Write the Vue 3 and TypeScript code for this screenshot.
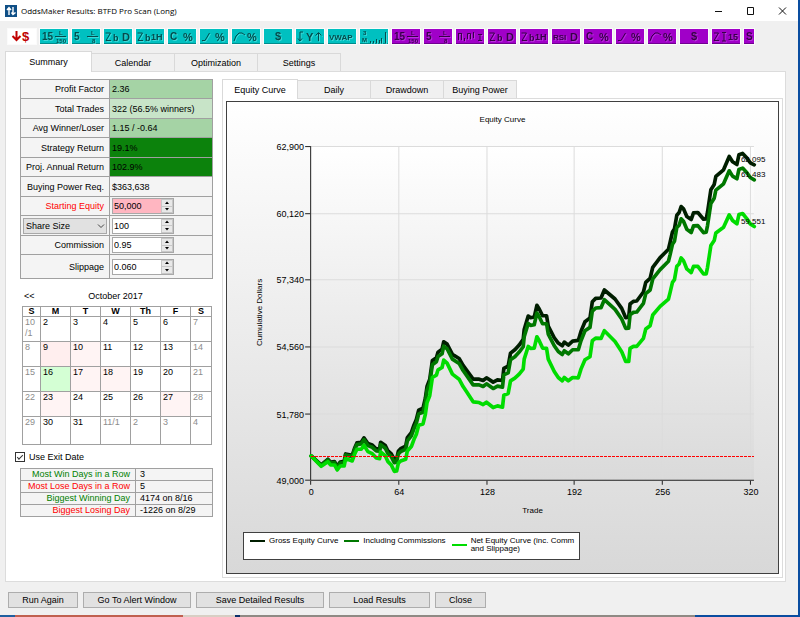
<script setup lang="ts">
import { ref } from 'vue'

interface Mark {
  text: string
  x: number
  y: number
  size: number
}
interface Tool {
  label: string
  tone: 'teal' | 'violet'
  marks: Mark[]
  path?: string
  cut?: boolean
}

const mk = (text: string, x: number, y: number, size = 10): Mark => ({ text, x, y, size })

const minute = (n: string, d: string) => ({
  marks: [mk(n, 2, 11, 10), mk('L', 19, 6, 6), mk(d, d.length > 1 ? 16 : 20, 14, 6)],
  path: 'M15 7.5H26',
})
const percentB = (unit: string) => ({
  marks: [mk('b', 9, 12, 9), unit === 'D' ? mk(unit, 18, 12, 11) : mk(unit, 15, 11, 9)],
  path: 'M1.5 4H6.5L2 11.5H7',
})

const tools: Tool[] = [
  { label: '15 minute volume', tone: 'teal', ...minute('15', '150') },
  { label: '5 minute volume', tone: 'teal', ...minute('5', '8') },
  { label: 'Daily band', tone: 'teal', ...percentB('D') },
  { label: 'Hourly band', tone: 'teal', ...percentB('1H') },
  { label: 'Change from close', tone: 'teal', marks: [mk('C', 2, 11), mk('%', 15, 12, 11)] },
  { label: 'Change from open', tone: 'teal', marks: [mk('%', 15, 12, 11)], path: 'M2 11.5H5L9.5 4' },
  { label: 'Change from high', tone: 'teal', marks: [mk('%', 15, 12, 11)], path: 'M2 12L4 7L7 4H10L13 6' },
  { label: 'Price', tone: 'teal', marks: [mk('$', 11, 11, 11)] },
  { label: 'Yearly range', tone: 'teal', marks: [mk('Y', 10, 12, 11)], path: 'M7 3H4V12M2 9.5L4 12L6 9.5M22.5 12V4M19.5 6.5L22.5 3.5L25.5 6.5' },
  { label: 'VWAP', tone: 'teal', marks: [mk('VWAP', 1, 11, 8)] },
  { label: '3 month volume', tone: 'teal', marks: [mk('3', 3, 6, 6), mk('M', 2, 13, 6)], path: 'M10.5 14V12M13.5 14V12M16.5 14V10M19.5 14V11M21.5 14V9M25.5 14V3' },
  { label: '15 minute volume', tone: 'violet', ...minute('15', '150') },
  { label: '5 minute volume', tone: 'violet', ...minute('5', '8') },
  { label: 'Candles', tone: 'violet', marks: [], path: 'M2.5 4V11M5.5 4V11M2.5 4.5H5M8.5 9V12M11.5 10V4.5H14.5V10M17.5 3V9M22 5.5H26M24 5V11M22 11.5H26' },
  { label: 'Daily band', tone: 'violet', ...percentB('D') },
  { label: 'Hourly band', tone: 'violet', ...percentB('1H') },
  { label: 'Daily RSI', tone: 'violet', marks: [mk('RSI', 1, 11, 8), mk('D', 18, 12, 11)] },
  { label: 'Change from close', tone: 'violet', marks: [mk('C', 2, 11), mk('%', 15, 12, 11)] },
  { label: 'Change from open', tone: 'violet', marks: [mk('%', 15, 12, 11)], path: 'M2 11.5H5L9.5 4' },
  { label: 'Change from high', tone: 'violet', marks: [mk('%', 15, 12, 11)], path: 'M2 12L4 7L7 4H10L13 6' },
  { label: 'Price', tone: 'violet', marks: [mk('$', 11, 11, 11)] },
  { label: '15 minute range', tone: 'violet', marks: [mk('15', 16, 11, 9)], path: 'M2 4H6.5L2 11.5H7M10 3.5H14M12 3V12M10 12H14' },
  { label: 'Spread', tone: 'violet', marks: [mk('S', 2, 11)], cut: true },
]

const mainTabs = ['Summary', 'Calendar', 'Optimization', 'Settings']
const chartTabs = ['Equity Curve', 'Daily', 'Drawdown', 'Buying Power']
const mainTab = ref('Summary')
const chartTab = ref('Equity Curve')

const results = [
  { label: 'Profit Factor', value: '2.36', tone: 'mid' },
  { label: 'Total Trades', value: '322 (56.5% winners)', tone: 'light' },
  { label: 'Avg Winner/Loser', value: '1.15 / -0.64', tone: 'mid' },
  { label: 'Strategy Return', value: '19.1%', tone: 'strong' },
  { label: 'Proj. Annual Return', value: '102.9%', tone: 'strong' },
  { label: 'Buying Power Req.', value: '$363,638', tone: '' },
]
const inputs = ref([
  { id: 'equity', label: 'Starting Equity', value: '50,000', alert: true },
  { id: 'size', label: 'Share Size', value: '100', alert: false },
  { id: 'commission', label: 'Commission', value: '0.95', alert: false },
  { id: 'slippage', label: 'Slippage', value: '0.060', alert: false },
])

const weekdays = ['S', 'M', 'T', 'W', 'Th', 'F', 'S']
const weeks = [
  ['10 /1', '2', '3', '4', '5', '6', '7'],
  ['8', '9', '10', '11', '12', '13', '14'],
  ['15', '16', '17', '18', '19', '20', '21'],
  ['22', '23', '24', '25', '26', '27', '28'],
  ['29', '30', '31', '11/1', '2', '3', '4'],
]
const dayTone: Record<string, string> = {
  '1-1': 'loss2', '1-2': 'loss', '2-1': 'gain', '2-2': 'loss', '2-3': 'loss', '3-1': 'loss', '3-5': 'loss',
}
const isMuted = (w: number, d: number) => d === 0 || d === 6 || (w === 4 && d > 2)

const useExitDate = ref(true)
const streaks = [
  { label: 'Most Win Days in a Row', value: '3', win: true },
  { label: 'Most Lose Days in a Row', value: '5', win: false },
  { label: 'Biggest Winning Day', value: '4174 on 8/16', win: true },
  { label: 'Biggest Losing Day', value: '-1226 on 8/29', win: false },
]

const actions = [
  { text: 'Run Again', size: 'w70' },
  { text: 'Go To Alert Window', size: 'w108' },
  { text: 'Save Detailed Results', size: 'w128' },
  { text: 'Load Results', size: 'w101' },
  { text: 'Close', size: 'w51' },
]

// Net equity samples in plot units: x 0-1327 spans all trades, y 0-1000 spans 62,900 down to 49,000.
const net = `0,928 30,959 50,945 58,955 70,955 78,970 87,958 99,958 103,936 123,943 130,923 137,908 150,908 158,896
170,915 183,921 195,934 205,936 208,916 222,928 230,945 240,955 249,974 256,973 261,950 268,943 283,938 288,913
300,900 308,878 315,863 322,836 335,832 342,803 347,768 355,748 363,693 375,686 380,670 392,663 397,641 407,650
423,683 443,698 455,720 467,738 485,766 503,768 515,774 525,767 545,783 558,778 573,782 577,746 590,741 597,703
610,695 623,683 635,668 638,638 650,600 657,606 668,605 676,571 683,583 693,605 705,606 710,638 728,675 740,693
752,703 758,693 770,703 783,693 800,694 808,668 820,640 835,631 842,583 852,575 868,576 878,553 910,585 930,616
942,645 951,645 955,606 965,600 975,600 995,576 1002,548 1015,538 1023,506 1045,480 1070,458 1075,438 1082,408
1088,400 1095,360 1102,353 1108,335 1115,343 1125,368 1138,379 1145,360 1158,360 1175,383 1183,383 1187,363
1197,298 1207,283 1212,260 1235,243 1252,206 1262,223 1275,233 1281,205 1292,202 1305,218 1315,233 1327,241`
  .trim().split(/\s+/).map((p) => p.split(',').map(Number))

// Costs accumulate evenly per trade, so the other curves are the net curve with those costs added back.
const withCosts = (total: number) =>
  net.map(([x, y]) => `${x},${Math.round(y - (x * total) / 1327)}`).join(' ')

const series = [
  { name: 'Gross Equity Curve', tone: 'gross', points: withCosts(185), last: '62,095', y: 60 },
  { name: 'Including Commissions', tone: 'comm', points: withCosts(140), last: '61,483', y: 75 },
  { name: 'Net Equity Curve (inc. Comm and Slippage)', tone: 'net', points: withCosts(0), last: '59,551', y: 122 },
]
const yTicks = ['62,900', '60,120', '57,340', '54,560', '51,780', '49,000']
const xTicks = [
  { label: '0', x: 0 }, { label: '64', x: 265 }, { label: '128', x: 527 },
  { label: '192', x: 790 }, { label: '256', x: 1053 }, { label: '320', x: 1318 },
]
const px = (v: number) => Math.round(84 + v / 3)
const py = (i: number) => Math.round(44 + (i * 200) / 3)
</script>

<template>
  <div class="window">
    <header class="titlebar">
      <svg class="logo" viewBox="0 0 12 12" aria-hidden="true">
        <rect width="12" height="12" fill="#0f4f86" />
        <path d="M4 10V3M2 5L4 2.5L6 5M8 2V9M6.5 7.5L8 9.5L10.5 7.5" fill="none" stroke="#fff" stroke-width="1.4" />
      </svg>
      <h1>OddsMaker Results: BTFD Pro Scan (Long)</h1>
      <div class="winbtns">
        <button type="button" aria-label="Minimize"><svg viewBox="0 0 10 10"><path d="M1 5.5H8" /></svg></button>
        <button type="button" aria-label="Maximize"><svg viewBox="0 0 10 10"><path d="M1.5 1.5H7.5V8.5H1.5Z" /></svg></button>
        <button type="button" aria-label="Close window"><svg viewBox="0 0 10 10"><path d="M1 1.5L8 8.5M8 1.5L1 8.5" /></svg></button>
      </div>
    </header>

    <nav class="toolbar" aria-label="Columns">
      <button type="button" class="tool plain" aria-label="Lower price">
        <svg viewBox="0 0 28 15">
          <path d="M8.5 2V11M4.5 7L8.5 11L12.5 7" fill="none" stroke="#c00000" stroke-width="2" />
          <text x="14" y="12" font-size="13" fill="#c00000">$</text>
        </svg>
      </button>
      <button v-for="(t, i) in tools" :key="i" type="button" class="tool" :class="[t.tone, { cut: t.cut }]" :aria-label="t.label">
        <svg :viewBox="t.cut ? '0 0 10 15' : '0 0 28 15'">
          <g class="ink">
            <path v-if="t.path" :d="t.path" />
            <text v-for="m in t.marks" :key="m.text" :x="m.x" :y="m.y" :font-size="m.size">{{ m.text }}</text>
          </g>
        </svg>
      </button>
    </nav>

    <div class="tabs main" role="tablist">
      <button v-for="t in mainTabs" :key="t" type="button" role="tab" :aria-selected="t === mainTab"
        :class="{ on: t === mainTab }" @click="mainTab = t">{{ t }}</button>
    </div>

    <main class="panel">
      <section class="side">
        <table class="results">
          <tbody>
            <tr v-for="r in results" :key="r.label">
              <th scope="row">{{ r.label }}</th>
              <td :class="r.tone">{{ r.value }}</td>
            </tr>
            <tr v-for="f in inputs" :key="f.id">
              <th scope="row" :class="{ red: f.alert, picker: f.id === 'size' }">
                <span v-if="f.id === 'size'" class="select">
                  <select aria-label="Sizing method"><option>Share Size</option></select>
                  <svg viewBox="0 0 8 6" aria-hidden="true"><path d="M1 1.5L4 4.5L7 1.5" /></svg>
                </span>
                <label v-else :for="f.id">{{ f.label }}</label>
              </th>
              <td>
                <span class="spin">
                  <input :id="f.id" v-model="f.value" type="text" :class="{ pink: f.alert }" :aria-label="f.label" />
                  <span class="arrows">
                    <button type="button" aria-label="Increase"><svg viewBox="0 0 6 4"><path d="M3 0.5L5 3H1Z" /></svg></button>
                    <button type="button" aria-label="Decrease"><svg viewBox="0 0 6 4"><path d="M3 3.5L5 1H1Z" /></svg></button>
                  </span>
                </span>
              </td>
            </tr>
          </tbody>
        </table>

        <div class="month">
          <button type="button" aria-label="Previous month">&lt;&lt;</button>
          <h2>October 2017</h2>
        </div>
        <table class="calendar">
          <thead>
            <tr><th v-for="(d, i) in weekdays" :key="i" scope="col">{{ d }}</th></tr>
          </thead>
          <tbody>
            <tr v-for="(w, wi) in weeks" :key="wi">
              <td v-for="(d, di) in w" :key="di" :class="[dayTone[`${wi}-${di}`], { muted: isMuted(wi, di) }]">{{ d }}</td>
            </tr>
          </tbody>
        </table>

        <label class="check"><input v-model="useExitDate" type="checkbox" />Use Exit Date</label>

        <table class="streaks">
          <tbody>
            <tr v-for="s in streaks" :key="s.label">
              <th scope="row" :class="s.win ? 'green' : 'red'">{{ s.label }}</th>
              <td>{{ s.value }}</td>
            </tr>
          </tbody>
        </table>
      </section>

      <section class="charts">
        <div class="tabs sub" role="tablist">
          <button v-for="t in chartTabs" :key="t" type="button" role="tab" :aria-selected="t === chartTab"
            :class="{ on: t === chartTab }" @click="chartTab = t">{{ t }}</button>
        </div>
        <div class="chartpanel">
          <figure class="frame">
            <svg class="chart" viewBox="0 0 550 429" role="img" aria-label="Equity curve chart">
              <defs>
                <linearGradient id="plotfill" x1="0" y1="0" x2="0" y2="1">
                  <stop offset="0" stop-color="#ffffff" />
                  <stop offset="1" stop-color="#dadada" />
                </linearGradient>
              </defs>
              <rect x="84" y="44" width="442" height="333" fill="url(#plotfill)" />
              <g class="grid">
                <path v-for="i in 5" :key="'h' + i" :d="`M84 ${py(i - 1) + 0.5}H526`" />
                <path v-for="t in xTicks.slice(1)" :key="'v' + t.x" :d="`M${px(t.x) - 0.5} 44V377`" />
              </g>
              <g class="axis">
                <path d="M83.5 44V377.5H526" />
                <path v-for="i in 6" :key="'y' + i" :d="`M78 ${py(i - 1) + 0.5}H83`" />
                <path v-for="t in xTicks" :key="'x' + t.x" :d="`M${px(t.x) - 0.5} 378V382`" />
              </g>
              <g transform="translate(84 44) scale(0.33333)" class="curves">
                <polyline v-for="s in series" :key="s.name" :class="s.tone" :points="s.points" />
              </g>
              <path d="M84 353.5H526" class="baseline" />
              <g class="ticks">
                <text v-for="(t, i) in yTicks" :key="t" x="77" :y="py(i) + 4" text-anchor="end">{{ t }}</text>
                <text v-for="t in xTicks" :key="t.label" :x="px(t.x)" y="392" text-anchor="middle">{{ t.label }}</text>
              </g>
              <g class="labels">
                <text v-for="s in series" :key="s.last" x="513" :y="s.y">{{ s.last }}</text>
                <text x="275" y="20" text-anchor="middle">Equity Curve</text>
                <text x="305" y="410" text-anchor="middle">Trade</text>
                <text transform="translate(35 210) rotate(-90)" text-anchor="middle">Cumulative Dollars</text>
              </g>
            </svg>
            <figcaption class="legend">
              <span v-for="s in series" :key="s.name" class="key"><i :class="s.tone"></i><span>{{ s.name }}</span></span>
            </figcaption>
          </figure>
        </div>
      </section>
    </main>

    <footer class="actions">
      <button v-for="a in actions" :key="a.text" type="button" :class="a.size">{{ a.text }}</button>
    </footer>
  </div>
</template>

<style>
body {
  margin: 0;
  background: #f0f0f0;
}
</style>

<style scoped>
.window {
  box-sizing: border-box;
  display: flex;
  flex-direction: column;
  min-height: 100vh;
  background: #f0f0f0;
  border-right: 2px solid #0a4da0;
  border-bottom: 2px solid;
  border-image: linear-gradient(90deg, #1f5f9f 0 17px, #c0604f 17px 185px, #d8cfc4 185px 236px, #0a2f6a 236px 241px, #8f8a84 241px 695px, #0a4da0 695px) 2;
  font-family: "Liberation Sans", Arial, sans-serif;
  font-size: 9px;
  line-height: 12px;
  color: #000;
}
button,
input,
select {
  font: inherit;
  color: inherit;
  margin: 0;
  padding: 0;
  border: 0;
  border-radius: 0;
}
button {
  background: none;
}
svg {
  display: block;
}
h1,
h2 {
  margin: 0;
  font-weight: normal;
  font-size: inherit;
}

.titlebar {
  display: flex;
  align-items: center;
  gap: 4px;
  height: 21px;
  padding: 0 10px 0 5px;
  background: #fff;
}
.logo {
  width: 12px;
  height: 12px;
}
.titlebar h1 {
  flex: 1;
  font-family: "Open Sans", "Noto Sans", sans-serif;
  font-size: 8px;
}
.winbtns {
  display: flex;
  gap: 22px;
}
.winbtns svg {
  width: 10px;
  height: 10px;
  fill: none;
  stroke: #111;
}

.toolbar {
  display: flex;
  gap: 4px;
  padding: 8px 8px 7px;
  overflow: hidden;
}
.toolbar .tool {
  flex: none;
  width: 28px;
  height: 15px;
  outline: 1px solid #fbfbfb;
}
.tool svg {
  width: 28px;
  height: 15px;
}
.tool text {
  font-weight: bold;
}
.toolbar .cut,
.cut svg {
  width: 10px;
}
.plain {
  background: #fff;
}
.teal {
  background: #00c0c0;
  box-shadow: inset 0 -1px #008c8c;
}
.violet {
  background: #a000c8;
  box-shadow: inset 0 -1px #700090;
}
.ink path {
  fill: none;
}
.teal .ink {
  fill: #044c4c;
  filter: drop-shadow(1px 1px 0 #40d8d8);
}
.violet .ink {
  fill: #380048;
  filter: drop-shadow(1px 1px 0 #b834dc);
}
.teal .ink path {
  stroke: #044c4c;
}
.violet .ink path {
  stroke: #380048;
}

.tabs {
  display: flex;
  align-items: flex-end;
  position: relative;
}
.tabs button {
  box-sizing: border-box;
  border: 1px solid #d9d9d9;
  border-left-width: 0;
  border-bottom: 0;
  background: #f0f0f0;
}
.tabs button.on {
  border-left-width: 1px;
  background: #fff;
  margin-bottom: -1px;
}
.main {
  padding-left: 5px;
  height: 20px;
}
.main button {
  width: 83px;
  height: 18px;
}
.main button.on {
  width: 87px;
  height: 21px;
}
.sub {
  height: 19px;
}
.sub button {
  width: 73px;
  height: 18px;
}
.sub button.on {
  width: 76px;
  height: 20px;
}

.panel {
  flex: 1;
  display: flex;
  align-items: flex-start;
  gap: 9px;
  margin: 0 12px 0 5px;
  padding: 7px 2px 3px 0;
  border: 1px solid #dcdcdc;
  background: #fff;
}
.side {
  flex: none;
  width: 207px;
}
table {
  border-collapse: collapse;
  table-layout: fixed;
}
.results,
.streaks {
  width: 193px;
  margin-left: 14px;
}
.results th,
.results td,
.streaks th,
.streaks td {
  border: 1px solid #a0a0a0;
  padding: 0;
  background: #f4f4f4;
  font-weight: normal;
}
.results th {
  width: 89px;
  padding-right: 5px;
  text-align: right;
  box-sizing: border-box;
}
.results td {
  padding-left: 2px;
}
.results tr {
  height: 19px;
}
.results tr:nth-child(even) {
  height: 20px;
}
.results tr:last-child {
  height: 24px;
}
.results td.mid {
  background: #a5d3a5;
}
.results td.light {
  background: #c8e4c8;
}
.results td.strong {
  background: #0c820c;
}
.results th.picker {
  padding: 0 2px;
}
th.red {
  color: #ff0000;
}
th.green {
  color: #008000;
}
.select {
  display: grid;
  align-items: center;
}
.select > * {
  grid-area: 1 / 1;
}
.select select {
  appearance: none;
  box-sizing: border-box;
  width: 100%;
  height: 16px;
  padding-left: 2px;
  border: 1px solid #a8a8a8;
  background: #e1e1e1;
}
.select svg {
  justify-self: end;
  width: 8px;
  height: 6px;
  margin-right: 2px;
  fill: none;
  stroke: #444;
  pointer-events: none;
}
.spin {
  display: flex;
  box-sizing: border-box;
  width: 62px;
  height: 16px;
  border: 1px solid #a8a8a8;
  background: #fff;
}
.spin input {
  flex: 1;
  min-width: 0;
  padding-left: 1px;
  background: #fff;
}
.spin input.pink {
  background: #ffb6c1;
}
.arrows {
  display: flex;
  flex-direction: column;
  width: 10px;
  margin: 1px;
  gap: 1px;
}
.arrows button {
  display: grid;
  place-items: center;
  flex: 1;
  background: #e8e8e8;
  outline: 1px solid #c8c8c8;
}
.arrows svg {
  width: 6px;
  height: 4px;
}

.month {
  display: grid;
  grid-template-columns: 30px 1fr 30px;
  align-items: center;
  height: 12px;
  margin: 11px 2px 4px 14px;
}
.month h2 {
  text-align: center;
}
.month button {
  text-align: left;
  padding-left: 4px;
}
.calendar {
  width: 189px;
  margin-left: 16px;
}
.calendar th,
.calendar td {
  border: 1px solid #a0a0a0;
  padding: 0;
}
.calendar th {
  height: 9px;
  width: 29px;
  line-height: 9px;
  font-weight: bold;
}
.calendar th:first-child {
  width: 17px;
}
.calendar th:last-child {
  width: 20px;
}
.calendar td {
  height: 24px;
  padding-left: 2px;
  line-height: 11px;
  vertical-align: top;
}
.calendar tr:last-child td {
  height: 27px;
}
.calendar .muted {
  color: #8c8c8c;
}
.calendar .loss {
  background: #fff4f4;
}
.calendar .loss2 {
  background: #ffeeee;
}
.calendar .gain {
  background: #d4ffd4;
}

.check {
  display: flex;
  align-items: center;
  gap: 4px;
  margin: 6px 0 5px 9px;
}
.check input {
  appearance: none;
  display: grid;
  place-items: center;
  box-sizing: border-box;
  width: 10px;
  height: 10px;
  border: 1px solid #333;
  background: #fff;
}
.check input:checked::after {
  content: "";
  width: 5px;
  height: 2px;
  margin-bottom: 2px;
  border: solid #333;
  border-width: 0 0 1px 1px;
  transform: rotate(-45deg);
}

.streaks tr {
  height: 12px;
}
.streaks th,
.streaks td {
  line-height: 11px;
}
.streaks th {
  width: 115px;
  box-sizing: border-box;
  padding-right: 5px;
  text-align: right;
}
.streaks td {
  padding-left: 4px;
}

.charts {
  flex: 1;
  min-width: 0;
}
.chartpanel {
  padding: 2px 3px 3px;
  border: 1px solid #dcdcdc;
}
.frame {
  margin: 0;
  padding-bottom: 13px;
  border: 1px solid #404040;
  background: linear-gradient(#ffffff, #d8d8d8);
}
.chart {
  width: 100%;
  height: auto;
}
.grid path {
  stroke: #dcdcdc;
}
.axis path {
  fill: none;
  stroke: #202020;
}
.curves polyline {
  fill: none;
  stroke-width: 11;
  stroke-linejoin: round;
  stroke-linecap: round;
}
.curves .gross {
  stroke: #001e00;
}
.curves .comm {
  stroke: #007800;
}
.curves .net {
  stroke: #00dc00;
}
.baseline {
  stroke: #ff0000;
  stroke-dasharray: 3 1;
  shape-rendering: crispEdges;
}
.ticks {
  font-size: 9px;
}
.labels {
  font-size: 8px;
}
.legend {
  display: inline-flex;
  align-items: flex-start;
  gap: 6px;
  box-sizing: border-box;
  height: 28px;
  margin-left: 16px;
  padding: 4px 3px 4px 6px;
  border: 1px solid #404040;
  background: #fff;
  font-size: 8px;
  line-height: 8px;
  vertical-align: top;
}
.key {
  display: flex;
  align-items: center;
  gap: 4px;
}
.key span {
  max-width: 105px;
}
.key i {
  width: 15px;
  height: 2px;
}
.key .gross {
  background: #001e00;
}
.key .comm {
  background: #007800;
}
.key .net {
  background: #00dc00;
}

.actions {
  display: flex;
  gap: 5px;
  padding: 10px 8px 7px;
}
.actions button {
  box-sizing: border-box;
  height: 16px;
  border: 1px solid #adadad;
  background: #e1e1e1;
}
.w70 {
  width: 70px;
}
.w108 {
  width: 108px;
}
.w128 {
  width: 128px;
}
.w101 {
  width: 101px;
}
.w51 {
  width: 51px;
}
</style>
